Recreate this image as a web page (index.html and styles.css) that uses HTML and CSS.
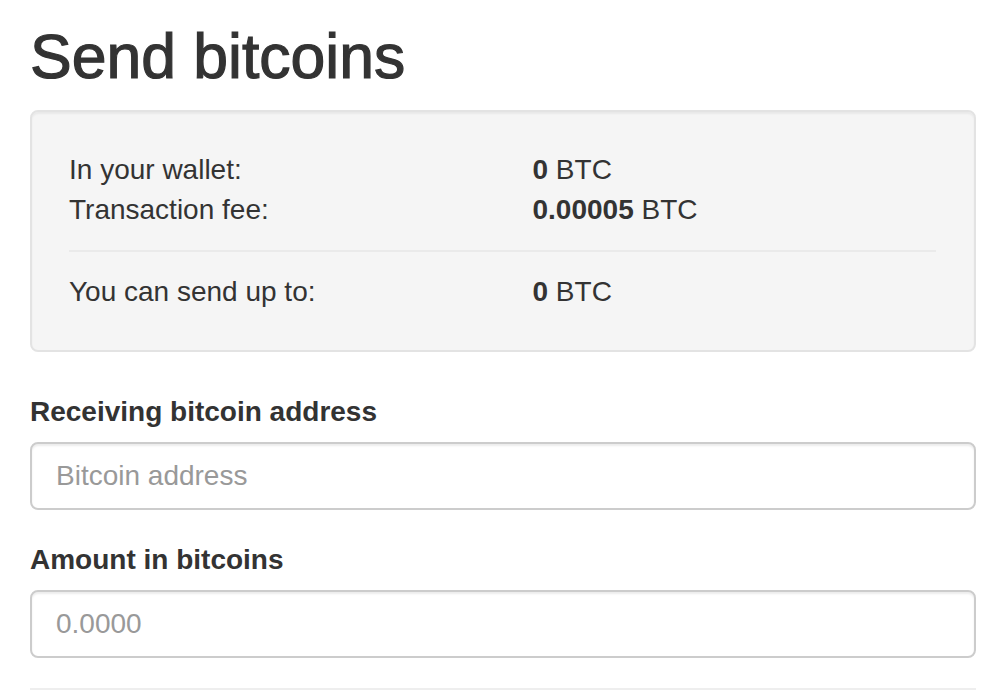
FILE: index.html
```html
<!DOCTYPE html>
<html lang="en">
<head>
    <meta charset="UTF-8">
    <meta name="viewport" content="width=device-width, initial-scale=1.0">
    <title>Send bitcoins</title>
    <link rel="stylesheet" href="styles.css">
</head>
<body>
    <div class="page">
        <h1 class="titulo">Send bitcoins</h1>

        <div class="well">
            <div class="fila">
                <div>In your wallet:</div>
                <div><b>0</b> BTC</div>
                <div>Transaction fee:</div>
                <div><b>0.00005</b> BTC</div>
            </div>
            <hr class="sep">
            <div class="fila">
                <div>You can send up to:</div>
                <div><b>0</b> BTC</div>
            </div>
        </div>

        <div class="grupo">
            <label for="direccion">Receiving bitcoin address</label>
            <input type="text" id="direccion" placeholder="Bitcoin address">
        </div>
        <div class="grupo">
            <label for="cantidad">Amount in bitcoins</label>
            <input type="text" id="cantidad" placeholder="0.0000">
        </div>
        <hr class="fin">
    </div>
</body>
</html>
```

FILE: styles.css
```css
body {
    margin: 0;
    background: #fff;
    color: #333;
    font-family: "Liberation Sans", Arial, sans-serif;
    font-size: 28px;
    line-height: 40px;
}
.page {
    padding: 0 25px 0 30px;
}
.titulo {
    margin: 22px 0 20px;
    font-size: 62.5px;
    font-weight: 500;
    line-height: 68px;
    -webkit-text-stroke: 1.2px #333;
}
.well {
    background-color: #f5f5f5;
    border: 2px solid #e3e3e3;
    border-radius: 8px;
    box-shadow: inset 0 2px 2px rgba(0, 0, 0, 0.05);
    padding: 38px 38px 38px 37px;
    margin-bottom: 40px;
}
.fila {
    display: grid;
    grid-template-columns: 1fr 1fr;
    column-gap: 60px;
}
.sep {
    margin: 20px 0;
    border: 0;
    border-top: 2px solid #eaeaea;
}
.grupo {
    margin-bottom: 30px;
}
.grupo label {
    display: block;
    font-weight: bold;
    margin-bottom: 10px;
}
.grupo input {
    display: block;
    box-sizing: border-box;
    width: 100%;
    height: 68px;
    padding: 12px 24px;
    font-family: inherit;
    font-size: 28px;
    color: #555;
    border: 2px solid #ccc;
    border-radius: 8px;
    box-shadow: inset 0 2px 2px rgba(0, 0, 0, 0.075);
    outline: none;
}
.grupo input::placeholder {
    color: #999;
}
.fin {
    margin: 0;
    border: 0;
    border-top: 2px solid #eee;
}
```
